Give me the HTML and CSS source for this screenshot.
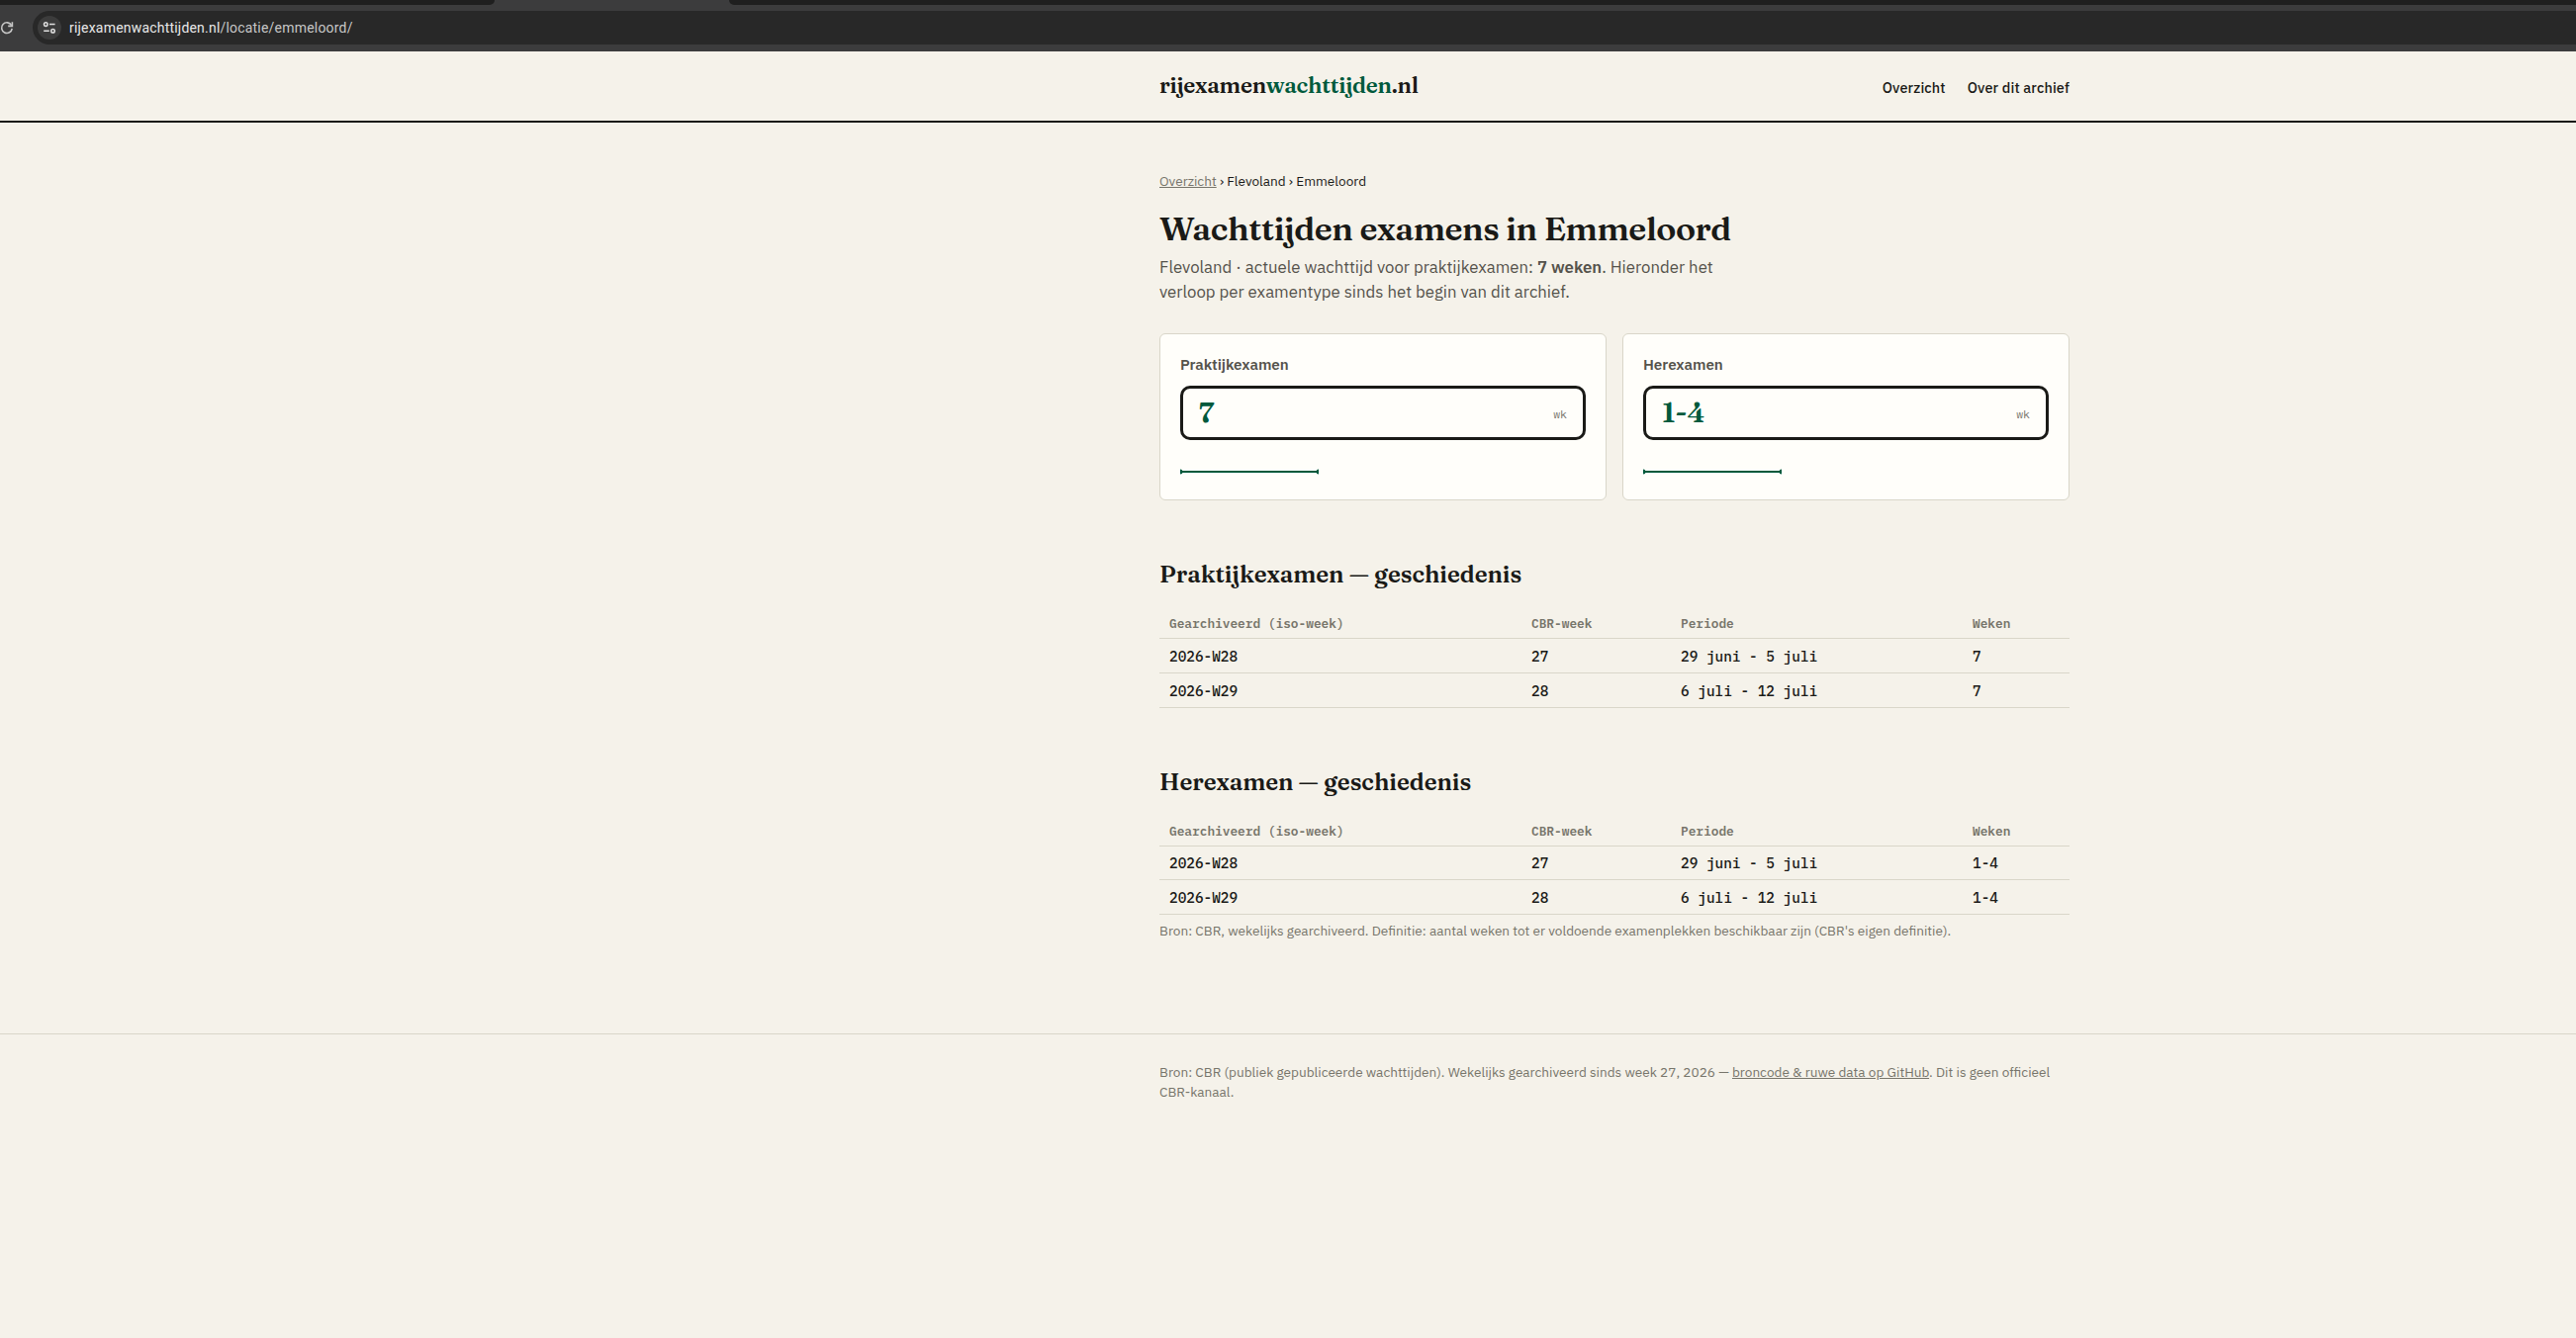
FILE: index.html
```
<!DOCTYPE html>
<html lang="nl">
<head>
    <meta charset="UTF-8">
    <meta name="viewport" content="width=device-width, initial-scale=1.0">
    <title>Wachttijden examens in Emmeloord</title>
    <link rel="stylesheet" href="styles.css">
</head>
<body>
    <!-- Browser bar -->
    <div class="browser">
        <div class="tabs">
            <div class="tab-left"></div>
            <div class="tab-right"></div>
        </div>
        <div class="toolbar">
            <svg class="reload" width="14" height="14" viewBox="0 0 14 14" fill="none" stroke="#c7c7c7" stroke-width="1.6">
                <path d="M11.6 4.6A5.3 5.3 0 1 0 12.2 7.8"/>
                <path d="M12.4 1.2v4.2H8.2"/>
            </svg>
            <div class="address">
                <span class="site-info">
                    <svg width="14" height="14" viewBox="0 0 14 14" fill="none" stroke="#dedede" stroke-width="1.5">
                        <circle cx="3.3" cy="3.6" r="1.8"/>
                        <path d="M7 3.6h5.6M1.2 10.2h5.6"/>
                        <circle cx="10.5" cy="10.2" r="1.8"/>
                    </svg>
                </span>
                <span class="url">rijexamenwachttijden.nl<span class="path">/locatie/emmeloord/</span></span>
            </div>
        </div>
    </div>

    <header class="site-header">
        <div class="wrap header-inner">
            <a class="logo" href="#">rijexamen<span>wachttijden</span>.nl</a>
            <nav class="nav">
                <a href="#">Overzicht</a>
                <a href="#">Over dit archief</a>
            </nav>
        </div>
    </header>

    <main class="wrap">
        <p class="breadcrumb"><a href="#">Overzicht</a> › Flevoland › Emmeloord</p>
        <h1>Wachttijden examens in Emmeloord</h1>
        <p class="lead">Flevoland · actuele wachttijd voor praktijkexamen: <strong>7 weken</strong>. Hieronder het verloop per examentype sinds het begin van dit archief.</p>

        <div class="cards">
            <div class="card">
                <h3>Praktijkexamen</h3>
                <div class="plate"><span class="value">7</span><span class="unit">wk</span></div>
                <svg class="spark" width="140" height="24" viewBox="0 0 140 24">
                    <path d="M0 12h140" stroke="#00593c" stroke-width="2"/>
                    <circle cx="0" cy="12" r="2.5" fill="#00593c"/>
                    <circle cx="140" cy="12" r="2.5" fill="#00593c"/>
                </svg>
            </div>
            <div class="card">
                <h3>Herexamen</h3>
                <div class="plate"><span class="value">1-4</span><span class="unit">wk</span></div>
                <svg class="spark" width="140" height="24" viewBox="0 0 140 24">
                    <path d="M0 12h140" stroke="#00593c" stroke-width="2"/>
                    <circle cx="0" cy="12" r="2.5" fill="#00593c"/>
                    <circle cx="140" cy="12" r="2.5" fill="#00593c"/>
                </svg>
            </div>
        </div>

        <section>
            <h2>Praktijkexamen — geschiedenis</h2>
            <table class="history">
                <colgroup><col class="col-iso"><col class="col-week"><col class="col-period"><col></colgroup>
                <thead>
                    <tr><th>Gearchiveerd (iso-week)</th><th>CBR-week</th><th>Periode</th><th>Weken</th></tr>
                </thead>
                <tbody>
                    <tr><td>2026-W28</td><td>27</td><td>29 juni - 5 juli</td><td>7</td></tr>
                    <tr><td>2026-W29</td><td>28</td><td>6 juli - 12 juli</td><td>7</td></tr>
                </tbody>
            </table>
        </section>

        <section>
            <h2>Herexamen — geschiedenis</h2>
            <table class="history">
                <colgroup><col class="col-iso"><col class="col-week"><col class="col-period"><col></colgroup>
                <thead>
                    <tr><th>Gearchiveerd (iso-week)</th><th>CBR-week</th><th>Periode</th><th>Weken</th></tr>
                </thead>
                <tbody>
                    <tr class="tight"><td>2026-W28</td><td>27</td><td>29 juni - 5 juli</td><td>1-4</td></tr>
                    <tr><td>2026-W29</td><td>28</td><td>6 juli - 12 juli</td><td>1-4</td></tr>
                </tbody>
            </table>
            <p class="note">Bron: CBR, wekelijks gearchiveerd. Definitie: aantal weken tot er voldoende examenplekken beschikbaar zijn (CBR's eigen definitie).</p>
        </section>
    </main>

    <footer class="site-footer">
        <div class="wrap">
            <p>Bron: CBR (publiek gepubliceerde wachttijden). Wekelijks gearchiveerd sinds week 27, 2026 — <a href="#">broncode &amp; ruwe data op GitHub</a>. Dit is geen officieel CBR-kanaal.</p>
        </div>
    </footer>
</body>
</html>
```
FILE: styles.css
```
:root {
    --paper: #f5f2ea;
    --ink: #1a1a17;
    --soft: #55534c;
    --muted: #77756b;
    --line: #d9d6c9;
    --green: #00593c;
    --serif: "Fraunces", "Liberation Serif", serif;
    --sans: "IBM Plex Sans", Roboto, sans-serif;
    --mono: "IBM Plex Mono", "Liberation Mono", monospace;
}

* {
    box-sizing: border-box;
}

html {
    background: var(--paper);
    overflow: hidden;
}

body {
    margin: 0;
    background: var(--paper);
    color: var(--ink);
    font-family: var(--sans);
}

h1, h2, h3, p {
    margin: 0;
}

h1, h2, h3 {
    font-weight: 600;
}

/* browser bar */
.browser {
    height: 52px;
    background: #3c3c3d;
}

.tabs {
    display: flex;
    justify-content: space-between;
    height: 5px;
}

.tab-left, .tab-right {
    background: #1f1f1f;
}

.tab-left {
    width: 500px;
    border-bottom-right-radius: 5px;
}

.tab-right {
    width: 1867px;
    border-bottom-left-radius: 5px;
}

.toolbar {
    display: flex;
    align-items: center;
    height: 34px;
    margin-top: 6px;
}

.reload {
    flex: none;
}

.address {
    display: flex;
    align-items: center;
    flex: 1;
    height: 34px;
    margin-left: 19px;
    padding-left: 5px;
    background: #282828;
    border-radius: 17px 0 0 17px;
}

.site-info {
    display: flex;
    align-items: center;
    justify-content: center;
    width: 24px;
    height: 24px;
    border-radius: 50%;
    background: #3c3c3c;
}

.url {
    margin-left: 8px;
    color: #e8e8e8;
    font-family: Roboto, sans-serif;
    font-size: 14px;
    letter-spacing: 0.2px;
}

.path {
    color: #c7c7c7;
}

/* page */
.wrap {
    width: 920px;
    margin-left: 1172px;
}

.site-header {
    height: 72px;
    border-bottom: 2px solid var(--ink);
}

.header-inner {
    display: flex;
    align-items: baseline;
    justify-content: space-between;
    padding-top: 15px;
}

.logo {
    color: var(--ink);
    font-family: var(--serif);
    font-size: 22.4px;
    font-weight: 600;
    line-height: 38px;
    letter-spacing: -0.25px;
    text-decoration: none;
}

.logo span {
    color: var(--green);
}

.nav {
    display: flex;
    gap: 22px;
}

.nav a {
    color: var(--ink);
    font-size: 14.4px;
    font-weight: 500;
    letter-spacing: 0.14px;
    text-decoration: none;
}

main {
    padding-top: 48px;
}

.breadcrumb {
    font-size: 13.6px;
    line-height: 22px;
}

.breadcrumb a {
    color: var(--muted);
}

h1 {
    margin-top: 17px;
    font-family: var(--serif);
    font-size: 33.6px;
    line-height: 40px;
    letter-spacing: -0.44px;
}

.lead {
    max-width: 600px;
    margin-top: 7px;
    color: var(--soft);
    font-size: 16.8px;
    line-height: 25px;
}

.lead strong {
    font-weight: 600;
}

.cards {
    display: grid;
    grid-template-columns: 1fr 1fr;
    gap: 16px;
    margin-top: 29px;
}

.card {
    padding: 19px 20px 16px;
    background: #fffefa;
    border: 1px solid var(--line);
    border-radius: 6px;
}

.card h3 {
    color: var(--soft);
    font-size: 15.2px;
    line-height: 22px;
    letter-spacing: -0.05px;
}

.plate {
    display: flex;
    align-items: center;
    justify-content: space-between;
    height: 55px;
    margin-top: 11px;
    padding: 0 16px;
    border: 3px solid var(--ink);
    border-radius: 10px;
}

.value {
    color: var(--green);
    font-family: var(--serif);
    font-size: 28.8px;
    font-weight: 600;
    line-height: 32px;
    margin-top: -2px;
}

.unit {
    margin-top: 2px;
    color: var(--muted);
    font-family: var(--mono);
    font-size: 11.5px;
}

.spark {
    display: block;
    margin-top: 20px;
}

h2 {
    margin-top: 59px;
    font-family: var(--serif);
    font-size: 24px;
    line-height: 32px;
    letter-spacing: -0.07px;
}

.history {
    width: 100%;
    margin-top: 19px;
    border-spacing: 0;
    table-layout: fixed;
    font-family: var(--mono);
    text-align: left;
}

.col-iso {
    width: 366px;
}

.col-week {
    width: 151px;
}

.col-period {
    width: 295px;
}

.history th {
    height: 30px;
    padding: 0 10px 1px;
    border-bottom: 1px solid var(--line);
    color: var(--muted);
    font-size: 12.8px;
    font-weight: 600;
}

.history td {
    height: 35px;
    padding: 0 10px;
    border-bottom: 1px solid var(--line);
    font-size: 14.4px;
    font-weight: 500;
}

.history .tight td {
    height: 34px;
}

.note {
    margin-top: 6px;
    color: var(--muted);
    font-size: 13.6px;
    line-height: 20px;
}

.site-footer {
    margin-top: 94px;
    padding-top: 28px;
    border-top: 1px solid var(--line);
    color: var(--muted);
    font-size: 13.6px;
    line-height: 20px;
}

.site-footer a {
    color: inherit;
}
```
